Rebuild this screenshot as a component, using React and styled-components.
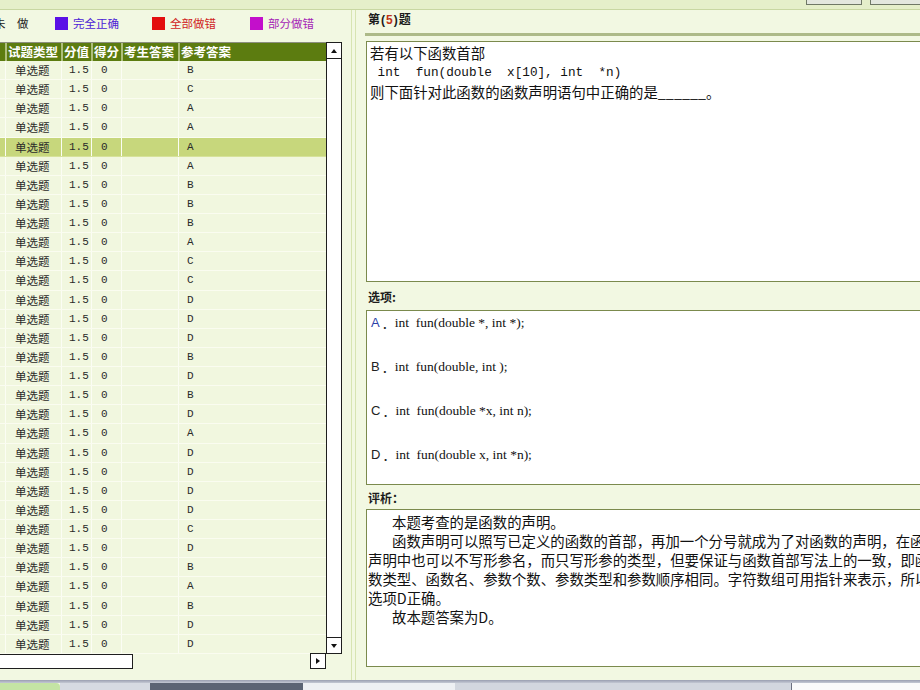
import React from "react";
import styled, { createGlobalStyle } from "styled-components";

const GlobalStyle = createGlobalStyle`
  * { box-sizing: border-box; }
  html, body { margin: 0; padding: 0; }
  body {
    width: 920px;
    height: 690px;
    overflow: hidden;
    background: #f2f8e2;
    font-family: "Noto Sans CJK SC", "Liberation Sans", sans-serif;
    color: #1c1c1c;
  }
`;

const COLS = "5px 56px 30px 30px 57px 148px";

const answers = "BCAAAABBBACCDDDBDBDADDDDCDBABDD".split("");

const options = [
  { key: "A", text: "int  fun(double *, int *);", blue: true },
  { key: "B", text: "int  fun(double, int );" },
  { key: "C", text: "int  fun(double *x, int n);" },
  { key: "D", text: "int  fun(double x, int *n);" },
];

const analysis = [
  { text: "本题考查的是函数的声明。", indent: true },
  { text: "函数声明可以照写已定义的函数的首部，再加一个分号就成为了对函数的声明，在函数", indent: true },
  { text: "声明中也可以不写形参名，而只写形参的类型，但要保证与函数首部写法上的一致，即函" },
  { text: "数类型、函数名、参数个数、参数类型和参数顺序相同。字符数组可用指针来表示，所以" },
  { text: "选项D正确。" },
  { text: "故本题答案为D。", indent: true },
];

const Page = styled.div`
  width: 920px;
  height: 690px;
  display: flex;
  flex-direction: column;
  overflow: hidden;
`;

const TopStrip = styled.div`
  flex: none;
  height: 10px;
  background: #e5efca;
  border-bottom: 1px solid #c8d7a2;
  display: flex;
  justify-content: flex-end;
  gap: 8px;
  margin-right: -6px;
`;

const TopButton = styled.div`
  width: 56px;
  height: 5px;
  background: #e3e7de;
  border: 1px solid #6f7866;
  border-top: none;
`;

const Main = styled.div`
  flex: none;
  height: 670px;
  display: flex;
`;

const LeftPanel = styled.div`
  flex: none;
  width: 343px;
  display: flex;
  flex-direction: column;
  overflow: hidden;
`;

const Legend = styled.div`
  height: 26px;
  display: flex;
  align-items: center;
  margin-left: -6px;
  font-size: 11.5px;
`;

const Pending = styled.div`
  width: 61px;
  color: #222;
`;

const LegendItem = styled.div`
  width: ${(p) => p.$w}px;
  display: flex;
  align-items: center;
  gap: 5px;
  color: ${(p) => p.$text};
`;

const Swatch = styled.span`
  width: 13px;
  height: 13px;
  background: ${(p) => p.$color};
`;

const GridArea = styled.div`
  margin-top: 6px;
  height: 612px;
  display: flex;
`;

const Table = styled.div`
  width: 326px;
  display: flex;
  flex-direction: column;
`;

const HeaderRow = styled.div`
  display: grid;
  grid-template-columns: ${COLS};
  height: 19px;
  background: #5c7c10;
  border-top: 1px solid #8c8f80;
`;

const HeaderCell = styled.div`
  color: #fff;
  font-weight: bold;
  font-size: 12.5px;
  line-height: 18px;
  padding-left: 1px;
  white-space: nowrap;
  overflow: hidden;
  border-left: ${(p) => (p.$first ? "none" : "2px solid #aebf7c")};
`;

const Row = styled.div`
  display: grid;
  grid-template-columns: ${COLS};
  height: 19.13px;
  background: ${(p) => (p.$selected ? "#c7d77c" : "#f1f7df")};
  border-bottom: 1px solid ${(p) => (p.$selected ? "#d6e29a" : "#fafcf0")};
`;

const Cell = styled.div`
  font-family: ${(p) =>
    p.$mono ? '"Liberation Mono", monospace' : '"Noto Sans CJK SC", sans-serif'};
  font-size: ${(p) => (p.$mono ? "11px" : "11.5px")};
  line-height: 18px;
  padding-left: ${(p) => p.$pad || 0}px;
  color: #2a2a2a;
  white-space: nowrap;
  border-left: ${(p) => (p.$first ? "none" : "1px solid #fbfdf4")};
`;

const VScroll = styled.div`
  width: 16px;
  background: #fff;
  border: 1px solid #1e1e1e;
  display: flex;
  flex-direction: column;
  justify-content: space-between;
`;

const ScrollBtn = styled.div`
  height: 16px;
  display: flex;
  align-items: center;
  justify-content: center;
  border-${(p) => (p.$down ? "top" : "bottom")}: 1px solid #1e1e1e;
`;

const Arrow = styled.span`
  width: 0;
  height: 0;
  border-left: ${(p) => (p.$dir === "right" ? "4px solid #111" : "3.5px solid transparent")};
  border-right: ${(p) => (p.$dir === "right" ? "none" : "3.5px solid transparent")};
  border-top: ${(p) =>
    p.$dir === "down" ? "4px solid #111" : p.$dir === "right" ? "3.5px solid transparent" : "none"};
  border-bottom: ${(p) =>
    p.$dir === "up" ? "4px solid #111" : p.$dir === "right" ? "3.5px solid transparent" : "none"};
`;

const HScrollRow = styled.div`
  height: 15px;
  display: flex;
  align-items: flex-start;
`;

const HThumb = styled.div`
  width: 133px;
  height: 15px;
  background: #fff;
  border: 1px solid #1e1e1e;
  border-left: none;
`;

const HArrowBox = styled.div`
  margin-left: 177px;
  width: 16px;
  height: 16px;
  margin-top: -1px;
  background: #fff;
  border: 1px solid #1e1e1e;
  display: flex;
  align-items: center;
  justify-content: center;
`;

const Splitter = styled.div`
  flex: none;
  width: 17px;
  background: linear-gradient(
    to right,
    transparent 8px,
    #d7e4b2 8px,
    #d7e4b2 9px,
    transparent 9px,
    transparent 12px,
    #d7e4b2 12px,
    #d7e4b2 13px,
    transparent 13px
  );
`;

const RightPanel = styled.div`
  flex: 1;
  overflow: hidden;
  padding-left: 6px;
  display: flex;
  flex-direction: column;
`;

const Title = styled.div`
  margin-top: 1px;
  height: 16px;
  line-height: 16px;
  padding-left: 2px;
  font-size: 12px;
  font-weight: bold;
  color: #1c1c1c;
  white-space: nowrap;
  display: flex;
  align-items: baseline;
`;

const Paren = styled.span`
  font-family: "Liberation Sans", sans-serif;
  font-weight: bold;
  margin: 0 1px;
`;

const Num = styled.span`
  font-family: "Liberation Sans", sans-serif;
  color: #c03418;
`;

const Rule = styled.div`
  margin-top: 6px;
  margin-left: -1px;
  height: 3px;
  width: 620px;
  background: #adba88;
`;

const Box = styled.div`
  flex: none;
  margin-top: ${(p) => p.$mt || 0}px;
  width: 600px;
  height: ${(p) => p.$h}px;
  background: #fff;
  border: 1px solid #7b8a4d;
  overflow: hidden;
  padding: ${(p) => p.$pad || "0"};
`;

const Label = styled.div`
  height: ${(p) => p.$h}px;
  display: flex;
  align-items: center;
  padding-left: 2px;
  font-size: 12px;
  font-weight: bold;
  color: #1c1c1c;
`;

const QLine = styled.div`
  font-family: ${(p) =>
    p.$mono ? '"Liberation Mono", monospace' : '"Noto Sans CJK SC", sans-serif'};
  font-size: ${(p) => (p.$mono ? "12.7px" : "14.4px")};
  line-height: 19.5px;
  white-space: pre;
  color: #111;
`;

const Option = styled.div`
  height: 44px;
  display: flex;
  align-items: flex-start;
  line-height: 19px;
  white-space: pre;
`;

const OptKey = styled.span`
  font-family: "Liberation Sans", sans-serif;
  font-size: 13px;
  color: ${(p) => (p.$blue ? "#2c3fa8" : "#222")};
`;

const OptDot = styled.span`
  font-family: "Noto Sans CJK SC", sans-serif;
  font-size: 13px;
  width: 15px;
  padding-left: 2px;
  color: #222;
`;

const OptText = styled.span`
  font-family: "Liberation Serif", serif;
  font-size: 13.5px;
  color: #111;
`;

const ALine = styled.div`
  font-size: 14.4px;
  line-height: 19px;
  white-space: nowrap;
  padding-left: ${(p) => (p.$indent ? "24px" : "0")};
  color: #111;
`;

const BottomBar = styled.div`
  flex: none;
  height: 10px;
  display: flex;
  flex-direction: column;
`;

const Band = styled.div`
  height: 3px;
  background: linear-gradient(#9a9fb1, #c4c8d3);
`;

const Tabs = styled.div`
  flex: 1;
  display: flex;
`;

const TabSeg = styled.div`
  width: ${(p) => (p.$w ? `${p.$w}px` : "auto")};
  flex: ${(p) => (p.$w ? "none" : 1)};
  background: ${(p) => p.$bg};
  border-right: ${(p) => (p.$edge ? "1px solid #6c7080" : "none")};
  border-top-right-radius: ${(p) => (p.$round ? "4px" : "0")};
`;

export default function App() {
  return (
    <>
      <GlobalStyle />
      <Page>
        <TopStrip>
          <TopButton />
          <TopButton />
        </TopStrip>
        <Main>
          <LeftPanel>
            <Legend>
              <Pending>未　做</Pending>
              <LegendItem $w={97} $text="#4c22d6">
                <Swatch $color="#5a10e6" />
                完全正确
              </LegendItem>
              <LegendItem $w={98} $text="#d01c1c">
                <Swatch $color="#e30e0e" />
                全部做错
              </LegendItem>
              <LegendItem $w={80} $text="#a51cb6">
                <Swatch $color="#c30fcb" />
                部分做错
              </LegendItem>
            </Legend>
            <GridArea>
              <Table>
                <HeaderRow>
                  <HeaderCell $first />
                  <HeaderCell>试题类型</HeaderCell>
                  <HeaderCell>分值</HeaderCell>
                  <HeaderCell>得分</HeaderCell>
                  <HeaderCell>考生答案</HeaderCell>
                  <HeaderCell>参考答案</HeaderCell>
                </HeaderRow>
                {answers.map((a, i) => (
                  <Row key={i} $selected={i === 4}>
                    <Cell $first />
                    <Cell $pad={9}>单选题</Cell>
                    <Cell $mono $pad={7}>1.5</Cell>
                    <Cell $mono $pad={9}>0</Cell>
                    <Cell />
                    <Cell $mono $pad={8}>{a}</Cell>
                  </Row>
                ))}
              </Table>
              <VScroll>
                <ScrollBtn>
                  <Arrow $dir="up" />
                </ScrollBtn>
                <ScrollBtn $down>
                  <Arrow $dir="down" />
                </ScrollBtn>
              </VScroll>
            </GridArea>
            <HScrollRow>
              <HThumb />
              <HArrowBox>
                <Arrow $dir="right" />
              </HArrowBox>
            </HScrollRow>
          </LeftPanel>
          <Splitter />
          <RightPanel>
            <Title>
              第<Paren>(</Paren>
              <Num>5</Num>
              <Paren>)</Paren>题
            </Title>
            <Rule />
            <Box $mt={5} $h={241} $pad="1px 3px">
              <QLine>若有以下函数首部</QLine>
              <QLine $mono> int  fun(double  x[10], int  *n)</QLine>
              <QLine>则下面针对此函数的函数声明语句中正确的是______。</QLine>
            </Box>
            <Label $h={28}>选项:</Label>
            <Box $h={175} $pad="1.5px 4px">
              {options.map((o) => (
                <Option key={o.key}>
                  <OptKey $blue={o.blue}>{o.key}</OptKey>
                  <OptDot>．</OptDot>
                  <OptText>{o.text}</OptText>
                </Option>
              ))}
            </Box>
            <Label $h={24}>评析：</Label>
            <Box $h={158} $pad="2px 1px">
              {analysis.map((l, i) => (
                <ALine key={i} $indent={l.indent}>
                  {l.text}
                </ALine>
              ))}
            </Box>
          </RightPanel>
        </Main>
        <BottomBar>
          <Band />
          <Tabs>
            <TabSeg $w={60} $bg="#c4e4a4" $round />
            <TabSeg $w={90} $bg="#d6dae2" />
            <TabSeg $w={153} $bg="#5c6474" />
            <TabSeg $w={152} $bg="#eef0f3" />
            <TabSeg $w={337} $bg="#d3d7df" $edge />
            <TabSeg $bg="#fafafa" />
          </Tabs>
        </BottomBar>
      </Page>
    </>
  );
}
